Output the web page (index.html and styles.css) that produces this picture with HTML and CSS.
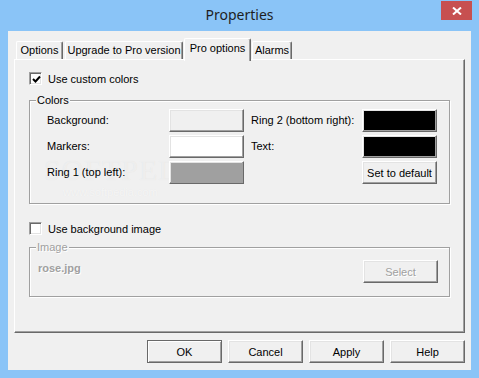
FILE: index.html
```html
<!DOCTYPE html>
<html>
<head>
<meta charset="utf-8">
<title>Properties</title>
<link rel="stylesheet" href="styles.css">
</head>
<body>
<div class="window">
  <div class="titlebar">
    <span class="title">Properties</span>
    <div class="close"><svg width="10" height="8" viewBox="0 0 10 8"><path d="M1 0.5 L9 7.5 M9 0.5 L1 7.5" stroke="#fff" stroke-width="2"/></svg></div>
  </div>
  <div class="client">
    <div class="tabs">
      <div class="tab t-options">Options</div>
      <div class="tab t-upgrade">Upgrade to Pro version</div>
      <div class="tab t-pro active">Pro options</div>
      <div class="tab t-alarms">Alarms</div>
    </div>
    <div class="panel">
      <div class="watermark">SOFTPEDIA<sup>™</sup></div>
      <div class="watermark-url">www.softpedia.com</div>
      <div class="check">
        <span class="box"><svg width="9" height="9" viewBox="0 0 9 9"><path d="M1 4 L3.5 6.5 L8 1.5" fill="none" stroke="#000" stroke-width="2"/></svg></span>
        <span>Use custom colors</span>
      </div>
      <div class="group colors">
        <div class="legend">Colors</div>
        <div class="color-grid">
          <span class="lbl">Background:</span><span class="btn swatch sw-bg"></span>
          <span class="lbl">Ring 2 (bottom right):</span><span class="btn swatch sw-black"></span>
          <span class="lbl">Markers:</span><span class="btn swatch sw-white"></span>
          <span class="lbl">Text:</span><span class="btn swatch sw-black"></span>
          <span class="lbl">Ring 1 (top left):</span><span class="btn swatch sw-gray"></span>
          <span></span><span class="btn">Set to default</span>
        </div>
      </div>
      <div class="check check2">
        <span class="box"></span>
        <span>Use background image</span>
      </div>
      <div class="group image">
        <div class="legend disabled">Image</div>
        <div class="image-row">
          <span class="file disabled">rose.jpg</span>
          <span class="btn disabled">Select</span>
        </div>
      </div>
    </div>
    <div class="buttons">
      <span class="btn default">OK</span>
      <span class="btn">Cancel</span>
      <span class="btn">Apply</span>
      <span class="btn">Help</span>
    </div>
  </div>
</div>
</body>
</html>
```

FILE: styles.css
```css
html, body {
  margin: 0;
  padding: 0;
}
body {
  width: 479px;
  height: 378px;
  background: #8ac4f7;
  font-family: "Liberation Sans", Arial, sans-serif;
  font-size: 11px;
  color: #000;
  overflow: hidden;
}
.window {
  padding: 0 8px 8px 8px;
}
.titlebar {
  height: 31px;
  display: grid;
  grid-template-columns: 1fr auto 1fr;
  align-items: start;
}
.title {
  grid-column: 2;
  font-family: "Noto Sans", "Open Sans", sans-serif;
  font-size: 14px;
  line-height: 29px;
  color: #1e1e1e;
}
.close {
  grid-column: 3;
  justify-self: end;
  margin: 1px -1px 0 0;
  width: 31px;
  height: 19px;
  background: #c75050;
  display: flex;
  align-items: center;
  justify-content: center;
}
.client {
  height: 339px;
  box-sizing: border-box;
  background: #f0f0f0;
  padding: 7px 6px 7px 6px;
}
.tabs {
  height: 21px;
  display: flex;
  align-items: flex-end;
  padding-left: 2px;
  position: relative;
  z-index: 1;
}
.tab {
  height: 18px;
  box-sizing: border-box;
  border-top: 1px solid #fff;
  border-left: 1px solid #fff;
  border-right: 1px solid #696969;
  border-radius: 2px 2px 0 0;
  box-shadow: inset -1px 0 0 #a0a0a0;
  background: #f0f0f0;
  display: flex;
  align-items: center;
  justify-content: center;
  white-space: nowrap;
  padding-bottom: 1px;
}
.t-options { width: 47px; margin-right: 2px; }
.t-upgrade { width: 118px; margin-right: 1px; }
.t-pro { width: 67px; }
.t-alarms { width: 40px; margin-left: 1px; }
.tab.active {
  height: 23px;
  margin-bottom: -2px;
  padding-bottom: 5px;
}
.panel {
  position: relative;
  z-index: 0;
  height: 274px;
  box-sizing: border-box;
  border-top: 1px solid #fff;
  border-left: 1px solid #fff;
  border-right: 1px solid #696969;
  border-bottom: 1px solid #696969;
  box-shadow: inset -1px -1px 0 #a0a0a0;
  padding: 12px 0 0 14px;
}
.check {
  display: flex;
  align-items: center;
  gap: 6px;
  height: 13px;
}
.box {
  width: 13px;
  height: 13px;
  box-sizing: border-box;
  border: 1px solid;
  border-color: #a0a0a0 #fff #fff #a0a0a0;
  box-shadow: inset 1px 1px 0 #696969, inset -1px -1px 0 #e3e3e3;
  background: #fff;
  display: flex;
  align-items: center;
  justify-content: center;
}
.box svg {
  margin: 1px 0 0 1px;
}
.group {
  width: 421px;
  box-sizing: border-box;
  border: 1px solid #a0a0a0;
  box-shadow: inset 1px 1px 0 #fff, 1px 1px 0 #fff;
}
.legend {
  width: fit-content;
  margin: -7px 0 0 6px;
  padding: 0 1px;
  height: 13px;
  line-height: 13px;
  background: #f0f0f0;
}
.colors {
  margin-top: 15px;
  height: 104px;
}
.color-grid {
  margin-top: 2px;
  padding-left: 17px;
  display: grid;
  grid-template-columns: 122px 82px 111px 75px;
  grid-auto-rows: 23px;
  row-gap: 3px;
  align-items: center;
}
.lbl {
  white-space: nowrap;
  margin-bottom: 2px;
}
.btn {
  width: 75px;
  height: 23px;
  box-sizing: border-box;
  border: 1px solid;
  border-color: #fff #696969 #696969 #fff;
  box-shadow: inset -1px -1px 0 #a0a0a0, inset 1px 1px 0 #e3e3e3;
  background: #f0f0f0;
  display: flex;
  align-items: center;
  justify-content: center;
  white-space: nowrap;
}
.swatch.sw-bg { background: #f0f0f0; }
.swatch.sw-white { background: #fff; }
.swatch.sw-gray { background: #a0a0a0; }
.swatch.sw-black { background: #000; }
.check2 {
  margin-top: 18px;
}
.image {
  margin-top: 12px;
  height: 50px;
}
.image-row {
  margin-top: 6px;
  padding: 0 11px 0 8px;
  display: flex;
  justify-content: space-between;
  align-items: flex-start;
}
.file {
  font-weight: bold;
  margin-top: 2px;
  line-height: 13px;
}
.disabled {
  color: #a0a0a0;
  text-shadow: 1px 1px 0 #fff;
}
.btn.disabled {
  color: #a0a0a0;
}
.watermark {
  position: absolute;
  z-index: -1;
  left: 29px;
  top: 93px;
  font-family: "Liberation Serif", serif;
  font-size: 30px;
  letter-spacing: 1px;
  color: rgba(255, 255, 255, 0.45);
  text-shadow: 0 0 1px rgba(0, 0, 0, 0.07);
  pointer-events: none;
}
.watermark sup {
  font-family: "Liberation Sans", sans-serif;
  font-size: 7px;
  vertical-align: 14px;
}
.watermark-url {
  position: absolute;
  z-index: -1;
  left: 48px;
  top: 126px;
  font-size: 11px;
  color: rgba(255, 255, 255, 0.6);
  text-shadow: 0 0 1px rgba(0, 0, 0, 0.06);
  pointer-events: none;
}
.buttons {
  margin-top: 7px;
  display: flex;
  justify-content: flex-end;
  gap: 6px;
}
.btn.default {
  border-color: #696969;
  box-shadow: inset 1px 1px 0 #fff, inset -1px -1px 0 #a0a0a0;
}
```
